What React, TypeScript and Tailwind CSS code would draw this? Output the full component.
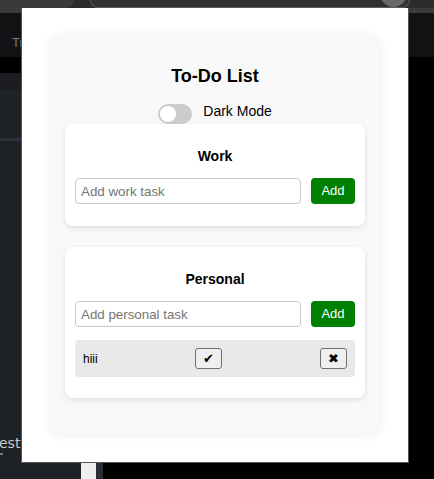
import { useState } from 'react'

const font = { fontFamily: '"Liberation Sans", Arial, sans-serif' }

function TaskInput({ placeholder }: { placeholder: string }) {
  return (
    <div className="flex items-center gap-[10px]">
      <input
        placeholder={placeholder}
        className="h-[26px] min-w-0 flex-1 rounded-[4px] border border-[#c8c8c8] bg-white px-[5px] text-[13.33px] outline-none placeholder:text-[#757575]"
      />
      <button className="h-[26px] w-[44px] rounded-[4px] bg-[#008000] text-[13px] text-white">Add</button>
    </div>
  )
}

function Category({ title, placeholder, tasks }: { title: string; placeholder: string; tasks: string[] }) {
  return (
    <section className="rounded-[8px] bg-white px-[10px] pt-[24px] pb-[22px] shadow-[0_2px_5px_rgba(0,0,0,0.1)]">
      <h3 className="mb-[14px] text-center text-[14px] font-bold leading-[16px] text-black">{title}</h3>
      <TaskInput placeholder={placeholder} />
      {tasks.length > 0 && (
        <ul className="mt-[13px] -mb-px">
          {tasks.map((t) => (
            <li key={t} className="flex h-[37px] items-center justify-between rounded-[4px] bg-[#e9e9e9] px-[8px]">
              <span className="text-[12px] text-black">{t}</span>
              <button className="flex h-[21px] w-[27px] items-center justify-center rounded-[3px] border border-[#707070] bg-[#efefef] text-[13px] leading-none text-black">
                ✔
              </button>
              <button className="flex h-[21px] w-[27px] items-center justify-center rounded-[3px] border border-[#707070] bg-[#efefef] text-[13px] leading-none text-black">
                ✖
              </button>
            </li>
          ))}
        </ul>
      )}
    </section>
  )
}

export default function App() {
  const [dark, setDark] = useState(false)

  return (
    <div className="relative flex h-[479px] w-[434px] flex-col overflow-hidden bg-black" style={font}>
      {/* browser chrome behind the popup */}
      <div className="flex h-[8px] items-end bg-[#2b2b2b]">
        <div className="h-full w-[74px] rounded-br-[8px] bg-[#3a3a3a]" />
        <div className="relative ml-[16px] h-[8px] w-[320px] rounded-b-[10px] border-x border-b border-[#5c5c5c] bg-[#303030]">
          <div className="absolute -top-[20px] right-[2px] h-[27px] w-[27px] rounded-full bg-[#686868]" />
        </div>
      </div>
      <div className="h-[5px] bg-[#3b3b3b]" />
      <div className="h-[44px] bg-[#111214] pl-[12px] pt-[22px] text-[13px] leading-[16px] text-[#7a7a7a]">Tr</div>
      <div className="flex flex-1">
        <div className="flex w-[81px] flex-col">
          <div className="h-[16px] bg-black" />
          <div className="h-[17px] bg-[#1c1d20]" />
          <div className="h-[51px] border-b-[3px] border-[#2c3038] bg-[#1f2328]" />
          <div className="flex flex-1 flex-col justify-end bg-[#1e2126] pb-[24px] text-[14px] text-[#c8c8c8]" style={{ fontFamily: '"DejaVu Sans", sans-serif' }}>
            <span className="-ml-[1px] leading-[16px]">est</span>
            <span className="mt-[2px] h-[2px] w-[3px] bg-[#777]" />
          </div>
        </div>
        <div className="w-[15px] bg-[#eeeeee]" />
        <div className="w-[7px] bg-[#2a2f36]" />
        <div className="flex-1 bg-black" />
      </div>

      {/* extension popup */}
      <div className="absolute left-[21px] top-[8px] h-[455px] w-[388px] border-x border-b border-[#555] bg-white px-[28px] pt-[28px]">
        <div className="rounded-[10px] bg-[#f8f8f8] px-[15px] pt-[29px] pb-[37px] shadow-[0_0_10px_rgba(0,0,0,0.08)]">
          <h1 className="text-center text-[18px] font-bold leading-[22px] text-black">To-Do List</h1>
          <div className="mt-[16px] flex items-start justify-center gap-[11px]">
            <button
              onClick={() => setDark(!dark)}
              className="mt-[1px] flex h-[20px] w-[34px] items-center rounded-full bg-[#cccccc] px-[2px]"
            >
              <span className="h-[16px] w-[16px] rounded-full bg-white" />
            </button>
            <span className="text-[14px] leading-[16px] text-black">Dark Mode</span>
          </div>
          <div className="flex flex-col gap-[21px]">
            <Category title="Work" placeholder="Add work task" tasks={[]} />
            <Category title="Personal" placeholder="Add personal task" tasks={['hiii']} />
          </div>
        </div>
      </div>
    </div>
  )
}
